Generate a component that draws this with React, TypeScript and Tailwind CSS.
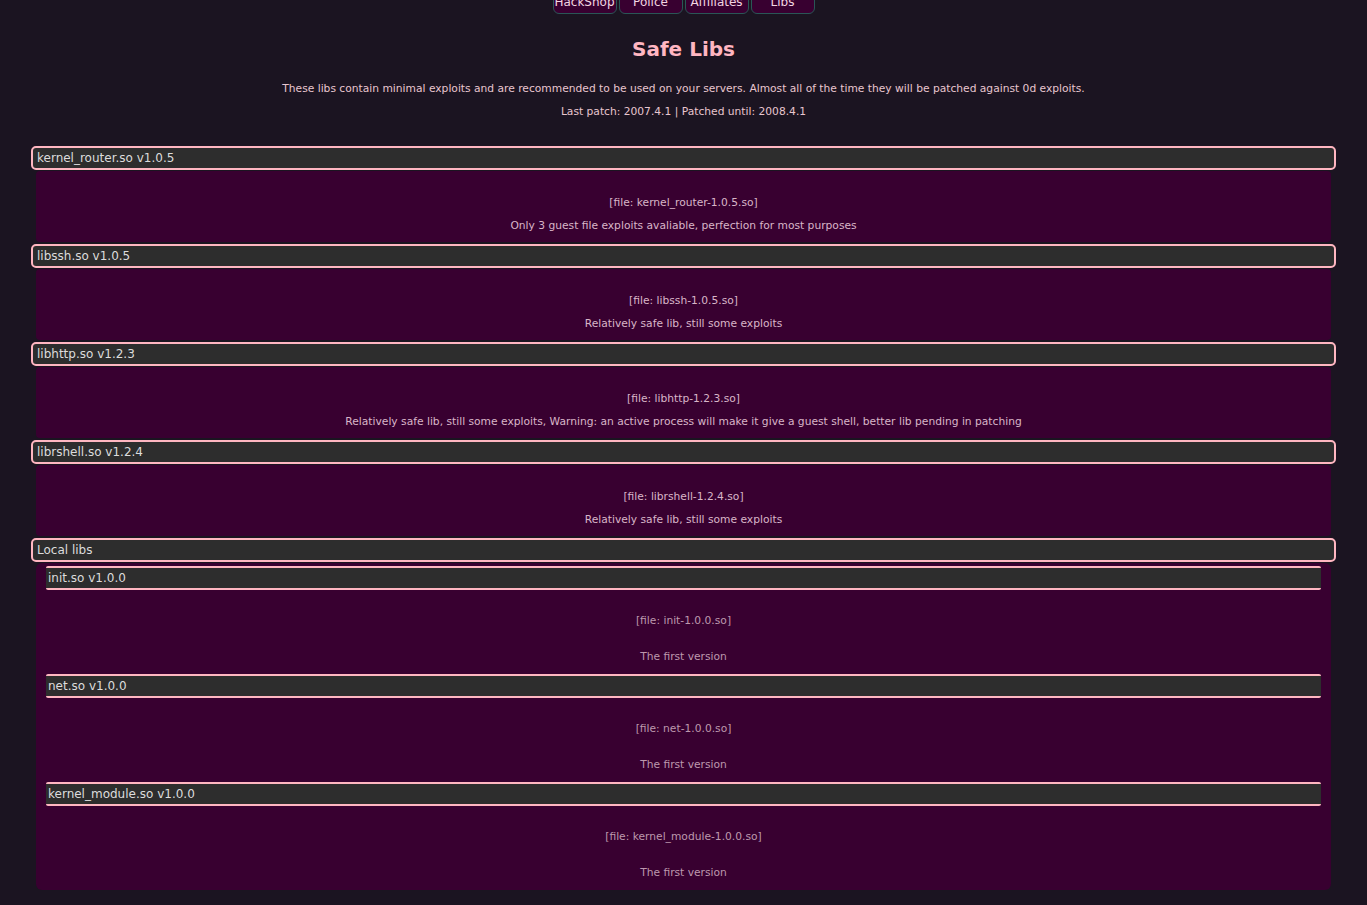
import React from "react";

interface Lib {
  name: string;
  file: string;
  desc: string;
}

const safeLibs: Lib[] = [
  { name: "kernel_router.so v1.0.5", file: "kernel_router-1.0.5.so", desc: "Only 3 guest file exploits avaliable, perfection for most purposes" },
  { name: "libssh.so v1.0.5", file: "libssh-1.0.5.so", desc: "Relatively safe lib, still some exploits" },
  { name: "libhttp.so v1.2.3", file: "libhttp-1.2.3.so", desc: "Relatively safe lib, still some exploits, Warning: an active process will make it give a guest shell, better lib pending in patching" },
  { name: "librshell.so v1.2.4", file: "librshell-1.2.4.so", desc: "Relatively safe lib, still some exploits" },
];

const localLibs: Lib[] = [
  { name: "init.so v1.0.0", file: "init-1.0.0.so", desc: "The first version" },
  { name: "net.so v1.0.0", file: "net-1.0.0.so", desc: "The first version" },
  { name: "kernel_module.so v1.0.0", file: "kernel_module-1.0.0.so", desc: "The first version" },
];

const tabs = ["HackShop", "Police", "Affiliates", "Libs"];

function LibButton({ label }: { label: string }) {
  return (
    <button className="block w-full h-[24px] text-left px-[4px] bg-[#2d2d2d] border-2 border-[#ffb6c1] rounded-[5px] text-[12px] leading-[18px] text-[#dcdcdc]">
      {label}
    </button>
  );
}

function InnerLib({ lib }: { lib: Lib }) {
  return (
    <div className="pb-[9px]">
      <button className="block w-full h-[24px] text-left px-[2px] bg-[#2d2d2d] border-y-2 border-[#ffb6c1] rounded-[2px] text-[12px] leading-[19px] text-[#dcdcdc]">
        {lib.name}
      </button>
      <p className="pt-[23px] text-center text-[10.7px] leading-[16px] text-[#bd98ad]">[file: {lib.file}]</p>
      <p className="pt-[20px] text-center text-[10.7px] leading-[16px] text-[#bd98ad]">{lib.desc}</p>
    </div>
  );
}

export default function App() {
  return (
    <div className="min-h-screen bg-[#1b1421] font-['DejaVu_Sans',sans-serif] px-[31px] pb-[15px] overflow-hidden">
      {/* top nav, page is scrolled a little */}
      <nav className="-mt-[12px] flex justify-center gap-[2px]">
        {tabs.map((t) => (
          <div
            key={t}
            className="w-[64px] h-[26px] pt-[5px] bg-[#380030] border border-[#2a5656] rounded-b-[6px] text-center text-[12px] leading-[16px] text-[#f3d6e2] whitespace-nowrap overflow-hidden"
          >
            {t}
          </div>
        ))}
      </nav>

      <h2 className="mt-[23px] text-center text-[20px] leading-[24px] font-bold text-[#ffb6c1]">Safe Libs</h2>
      <p className="mt-[20px] text-center text-[10.7px] leading-[16px] text-[#e8c6cf]">
        These libs contain minimal exploits and are recommended to be used on your servers. Almost all of the time they will be patched against 0d exploits.
      </p>
      <p className="mt-[7px] text-center text-[10.7px] leading-[16px] text-[#e8c6cf]">
        Last patch: 2007.4.1 | Patched until: 2008.4.1
      </p>

      <div className="mt-[26px]">
        {safeLibs.map((lib) => (
          <div key={lib.name} className="pb-[2px]">
            <LibButton label={lib.name} />
            <div className="mt-[1px] mx-[5px] bg-[#380030] rounded-[4px] pt-[24px] pb-[8px] text-center text-[10.7px] leading-[16px] text-[#d8b6c8]">
              <p>[file: {lib.file}]</p>
              <p className="mt-[7px]">{lib.desc}</p>
            </div>
          </div>
        ))}

        <LibButton label="Local libs" />
        <div className="mt-[1px] mx-[5px] bg-[#380030] rounded-[6px] pt-[3px] px-[10px]">
          {localLibs.map((lib) => (
            <InnerLib key={lib.name} lib={lib} />
          ))}
        </div>
      </div>
    </div>
  );
}
